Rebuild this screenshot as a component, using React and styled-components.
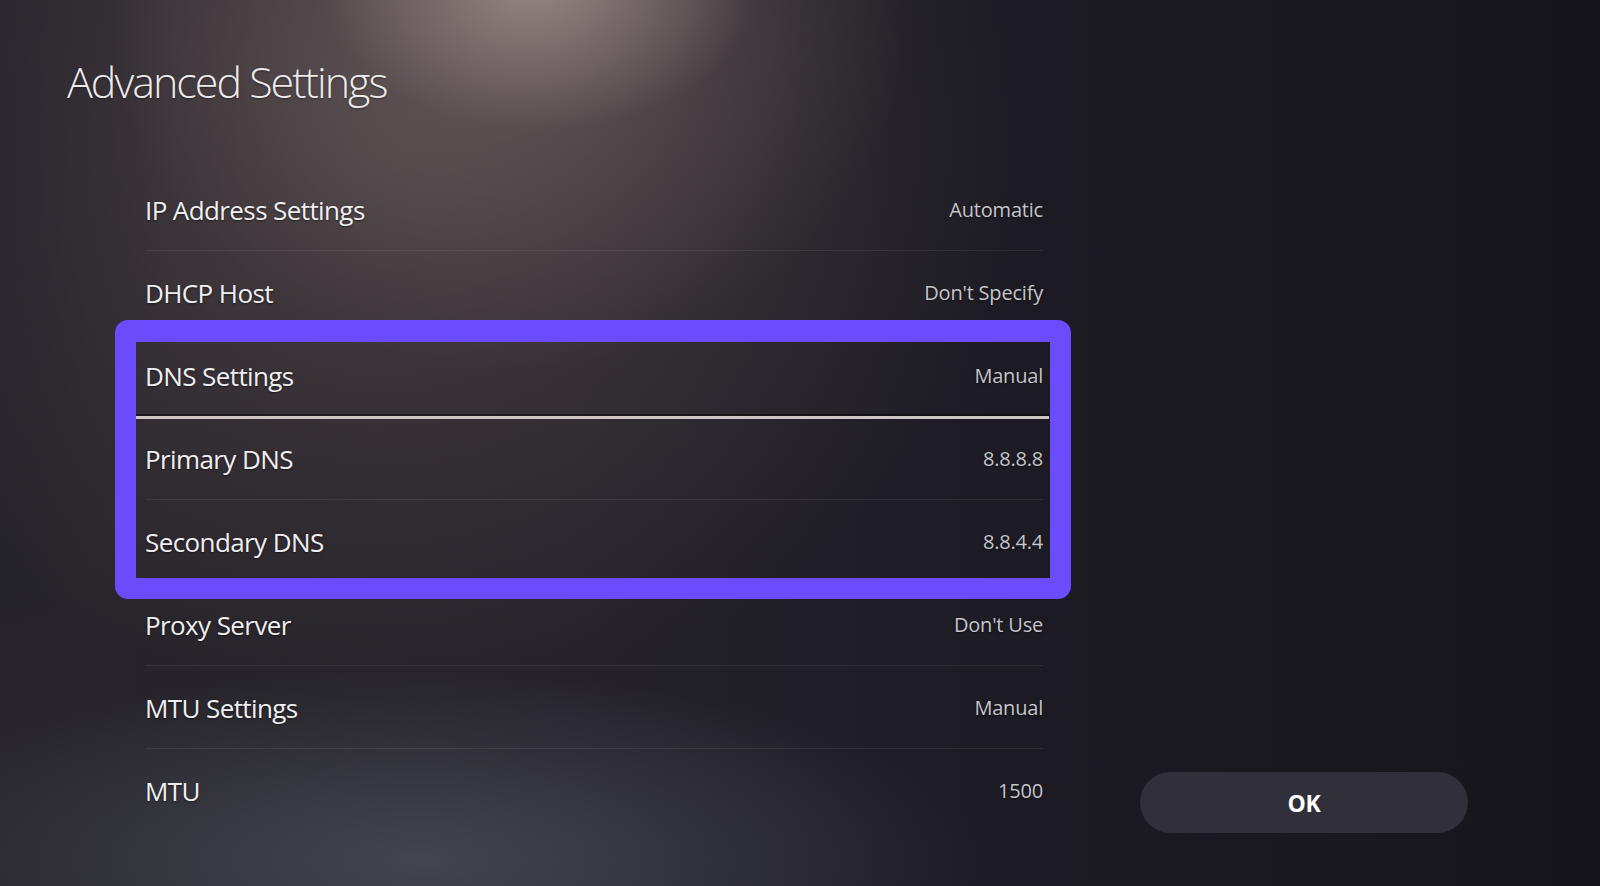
import React from "react";
import styled, { createGlobalStyle } from "styled-components";

const GlobalStyle = createGlobalStyle`
  html, body {
    margin: 0;
    padding: 0;
    background: #1b1a22;
  }

  body {
    font-family: "Open Sans", "Noto Sans", sans-serif;
  }
`;

const topRows = [
  { label: "IP Address Settings", value: "Automatic" },
  { label: "DHCP Host", value: "Don't Specify" },
];

const dnsRows = [
  { label: "DNS Settings", value: "Manual", focused: true },
  { label: "Primary DNS", value: "8.8.8.8" },
  { label: "Secondary DNS", value: "8.8.4.4" },
];

const bottomRows = [
  { label: "Proxy Server", value: "Don't Use" },
  { label: "MTU Settings", value: "Manual" },
  { label: "MTU", value: "1500", last: true },
];

const SettingRow = ({ label, value, focused, last }) => (
  <Row $focused={focused} $last={last}>
    <Label>{label}</Label>
    <Value>{value}</Value>
  </Row>
);

const App = () => {
  return (
    <>
      <GlobalStyle />
      <Page>
        <Title>Advanced Settings</Title>
        <Content>
          <List>
            {topRows.map((row) => (
              <SettingRow key={row.label} {...row} />
            ))}
            <DnsGroup>
              {dnsRows.map((row) => (
                <SettingRow key={row.label} {...row} />
              ))}
            </DnsGroup>
            {bottomRows.map((row) => (
              <SettingRow key={row.label} {...row} />
            ))}
          </List>
          <OkButton>OK</OkButton>
        </Content>
      </Page>
    </>
  );
};

export default App;

const Page = styled.div`
  width: 1600px;
  height: 886px;
  box-sizing: border-box;
  overflow: hidden;
  padding: 60px 0 0 67px;
  display: flex;
  flex-direction: column;
  background:
    radial-gradient(ellipse 220px 150px at 540px -20px, rgba(185, 165, 160, 0.6), rgba(185, 165, 160, 0) 100%),
    radial-gradient(ellipse 400px 360px at 510px 10px, rgba(135, 118, 116, 0.5), rgba(135, 118, 116, 0) 100%),
    radial-gradient(ellipse 620px 560px at 400px 140px, rgba(95, 80, 82, 0.6), rgba(95, 80, 82, 0) 100%),
    radial-gradient(ellipse 560px 190px at 420px 860px, rgba(92, 98, 108, 0.55), rgba(92, 98, 108, 0) 100%),
    radial-gradient(ellipse 180px 500px at 0px 150px, rgba(22, 22, 34, 0.6), rgba(22, 22, 34, 0) 100%),
    linear-gradient(90deg, #27252b 0%, #25222a 35%, #1c1b23 65%, #16151c 100%);
`;

const Title = styled.h1`
  margin: 0;
  font-size: 43px;
  font-weight: 300;
  line-height: 1;
  letter-spacing: -2px;
  color: #ecebea;
  text-shadow: 0 1px 2px rgba(0, 0, 0, 0.4);
`;

const Content = styled.div`
  display: flex;
  align-items: flex-end;
  margin: 65px 0 0 69px;
`;

const List = styled.div`
  width: 913px;
  display: flex;
  flex-direction: column;
`;

const DnsGroup = styled.div`
  position: relative;
  display: flex;
  flex-direction: column;

  &::before {
    content: "";
    position: absolute;
    top: -14px;
    bottom: -16px;
    left: -21px;
    right: -22px;
    border: 21px solid #6b4cfc;
    border-top-width: 22px;
    border-radius: 13px;
    pointer-events: none;
    z-index: 2;
  }
`;

const Row = styled.div`
  position: relative;
  height: 83px;
  flex-shrink: 0;
  display: flex;
  align-items: center;
  justify-content: space-between;
  padding: 0 6px 0 9px;

  &::after {
    content: "";
    display: ${(props) => (props.$last ? "none" : "block")};
    position: absolute;
    left: ${(props) => (props.$focused ? "0" : "10px")};
    right: ${(props) => (props.$focused ? "0" : "6px")};
    bottom: ${(props) => (props.$focused ? "-2px" : "0")};
    height: ${(props) => (props.$focused ? "3px" : "1px")};
    background: ${(props) =>
      props.$focused ? "#cdc6c3" : "rgba(255, 255, 255, 0.07)"};
    box-shadow: ${(props) =>
      props.$focused ? "0 -2px 0 rgba(0, 0, 0, 0.45)" : "none"};
    z-index: 1;
  }
`;

const Label = styled.span`
  font-size: 26px;
  line-height: 1;
  letter-spacing: -0.6px;
  color: #f0eff0;
  text-shadow: 0 1px 2px rgba(0, 0, 0, 0.5);
`;

const Value = styled.span`
  font-size: 20px;
  line-height: 1;
  letter-spacing: -0.2px;
  color: #c6c5ca;
  text-shadow: 0 1px 2px rgba(0, 0, 0, 0.5);
`;

const OkButton = styled.button`
  margin: 0 0 -1px 91px;
  width: 328px;
  height: 61px;
  border: none;
  border-radius: 31px;
  background: #312f39;
  color: #ffffff;
  font-family: "Open Sans", "Noto Sans", sans-serif;
  font-size: 23px;
  font-weight: 700;
  letter-spacing: -0.3px;
  display: flex;
  align-items: center;
  justify-content: center;
  cursor: pointer;
`;
